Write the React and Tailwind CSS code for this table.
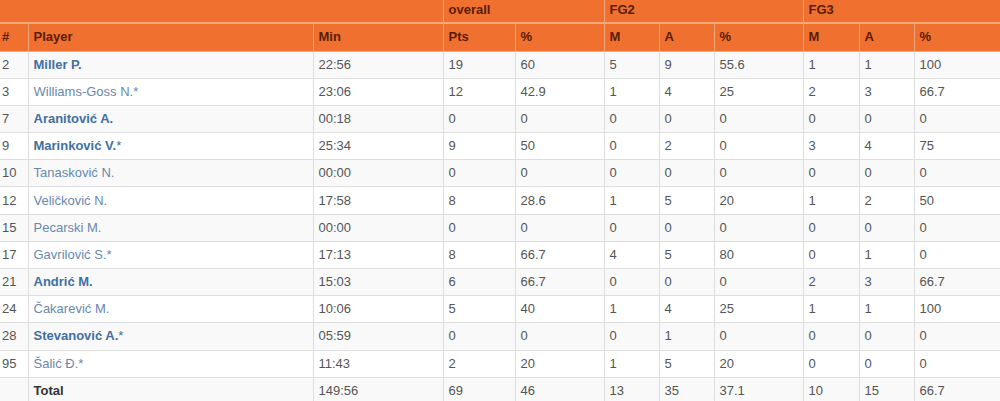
const rows = [
  ['2', 'Miller P.', true, '22:56', '19', '60', '5', '9', '55.6', '1', '1', '100'],
  ['3', 'Williams-Goss N.*', false, '23:06', '12', '42.9', '1', '4', '25', '2', '3', '66.7'],
  ['7', 'Aranitović A.', true, '00:18', '0', '0', '0', '0', '0', '0', '0', '0'],
  ['9', 'Marinković V.*', true, '25:34', '9', '50', '0', '2', '0', '3', '4', '75'],
  ['10', 'Tanasković N.', false, '00:00', '0', '0', '0', '0', '0', '0', '0', '0'],
  ['12', 'Veličković N.', false, '17:58', '8', '28.6', '1', '5', '20', '1', '2', '50'],
  ['15', 'Pecarski M.', false, '00:00', '0', '0', '0', '0', '0', '0', '0', '0'],
  ['17', 'Gavrilović S.*', false, '17:13', '8', '66.7', '4', '5', '80', '0', '1', '0'],
  ['21', 'Andrić M.', true, '15:03', '6', '66.7', '0', '0', '0', '2', '3', '66.7'],
  ['24', 'Čakarević M.', false, '10:06', '5', '40', '1', '4', '25', '1', '1', '100'],
  ['28', 'Stevanović A.*', true, '05:59', '0', '0', '0', '1', '0', '0', '0', '0'],
  ['95', 'Šalić Đ.*', false, '11:43', '2', '20', '1', '5', '20', '0', '0', '0'],
];

const widths = [28, 285, 130, 72, 89, 55, 55, 89, 56, 55, 86];
const heads = ['#', 'Player', 'Min', 'Pts', '%', 'M', 'A', '%', 'M', 'A', '%'];

function Name({ text, bold }) {
  const star = text.endsWith('*');
  const base = star ? text.slice(0, -1) : text;
  return (
    <span className={bold ? 'font-bold text-[#3f6fa3]' : 'text-[#6888ad]'}>
      {base}
      {star && <span className="font-normal">*</span>}
    </span>
  );
}

export default function App() {
  return (
    <div className="w-[1000px] h-[401px] overflow-hidden bg-white" style={{ fontFamily: '"Liberation Sans", Arial, sans-serif' }}>
      <table className="w-[1000px] table-fixed border-collapse text-[13px] leading-[16px]">
        <colgroup>
          {widths.map((w, i) => (
            <col key={i} style={{ width: w }} />
          ))}
        </colgroup>
        <thead className="bg-[#f0712f] text-[#5a1c05] font-bold">
          <tr className="h-[23px]">
            <th colSpan={3} className="text-left px-[5px] border-r border-b-2 border-[#f7a57a]"></th>
            <th colSpan={2} className="text-left align-top pt-[2px] px-[5px] border-r border-b-2 border-[#f7a57a]">overall</th>
            <th colSpan={3} className="text-left align-top pt-[2px] px-[5px] border-r border-b-2 border-[#f7a57a]">FG2</th>
            <th colSpan={3} className="text-left align-top pt-[2px] px-[5px] border-b-2 border-[#f7a57a]">FG3</th>
          </tr>
          <tr className="h-[28px]">
            {heads.map((h, i) => (
              <th key={i} className={`text-left ${i === 0 ? 'pl-[2px] pr-0' : 'px-[5px]'} border-b border-[#f7a57a] ${i < heads.length - 1 ? 'border-r' : ''}`}>{h}</th>
            ))}
          </tr>
        </thead>
        <tbody className="text-[#555]">
          {rows.map((r, ri) => (
            <tr key={ri} className={`h-[27.2px] ${ri % 2 === 0 ? 'bg-[#f9f9f9]' : 'bg-white'}`}>
              {widths.map((_, ci) => {
                const val = ci < 2 ? r[ci] : r[ci + 1];
                return (
                  <td key={ci} className={`${ci === 0 ? 'pl-[2px] pr-0' : 'px-[5px]'} border-b border-[#dddddd] ${ci < widths.length - 1 ? 'border-r' : ''}`}>
                    {ci === 1 ? <Name text={r[1]} bold={r[2]} /> : val}
                  </td>
                );
              })}
            </tr>
          ))}
          <tr className="h-[27.2px] bg-[#f9f9f9]">
            {['', 'Total', '149:56', '69', '46', '13', '35', '37.1', '10', '15', '66.7'].map((v, ci) => (
              <td key={ci} className={`${ci === 0 ? 'pl-[2px] pr-0' : 'px-[5px]'} border-b border-[#dddddd] ${ci < widths.length - 1 ? 'border-r' : ''} ${ci === 1 ? 'font-bold text-[#333]' : ''}`}>{v}</td>
            ))}
          </tr>
        </tbody>
      </table>
    </div>
  );
}
